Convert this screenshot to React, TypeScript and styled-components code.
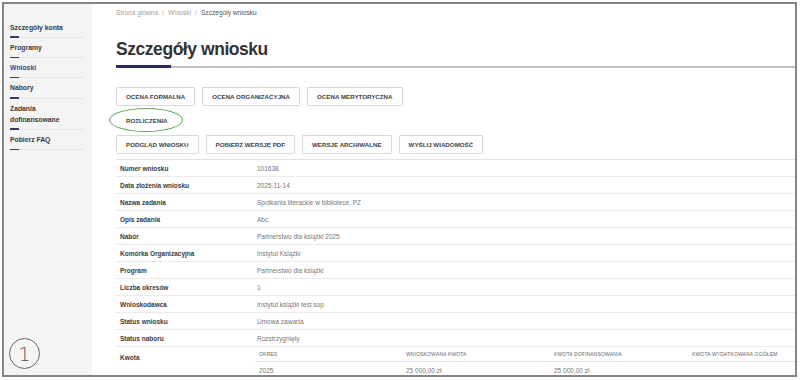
import React from "react";
import styled, { createGlobalStyle } from "styled-components";

const GlobalStyle = createGlobalStyle`
  html, body {
    margin: 0;
    padding: 0;
    background: #ffffff;
  }
  body {
    font-family: "Liberation Sans", Arial, sans-serif;
    color: #333;
  }
`;

const Frame = styled.div`
  position: relative;
  margin: 2px;
  width: 791px;
  height: 371px;
  border: 2px solid #858585;
  display: flex;
  overflow: hidden;
  background: #fff;
`;

const Sidebar = styled.nav`
  flex: 0 0 88px;
  background: #f4f4f4;
  padding: 13.5px 8px 0 6px;
  box-sizing: border-box;
`;

const NavItem = styled.div<{ $active?: boolean }>`
  position: relative;
  padding: 4px 0 4.3px;
  font-size: 6.8px;
  line-height: 11px;
  font-weight: bold;
  color: ${(p) => (p.$active ? "#3d3e8e" : "#3a3a3a")};
  border-bottom: 1px solid #e3e3e3;

  &::after {
    content: "";
    position: absolute;
    left: 0;
    bottom: -1px;
    width: 9px;
    height: 1.5px;
    background: #3a3c62;
  }
`;

const Annotation = styled.div`
  position: absolute;
  left: 5px;
  bottom: 6px;
  width: 29px;
  height: 29px;
  border: 1px solid #6a6a6a;
  border-radius: 50%;
  display: flex;
  align-items: center;
  justify-content: center;
  font-size: 19px;
  font-family: "DejaVu Sans", sans-serif;
  font-weight: 200;
  color: #555;
`;

const Main = styled.main`
  flex: 1;
  padding: 4px 0 0 24px;
  min-width: 0;
`;

const Breadcrumb = styled.div`
  font-size: 6.6px;
  line-height: 9px;
  color: #a0a0a0;
  display: flex;
  gap: 4px;

  span:last-child {
    color: #555;
  }
`;

const TitleBlock = styled.div`
  position: relative;
  margin-top: 22px;
  padding-bottom: 7px;
  border-bottom: 2px solid #c2c2c2;

  &::after {
    content: "";
    position: absolute;
    left: 0;
    bottom: -2px;
    width: 55px;
    height: 3px;
    background: #2b2c5c;
  }
`;

const Title = styled.h1`
  margin: 0;
  font-size: 17.5px;
  line-height: 20px;
  font-weight: bold;
  letter-spacing: -0.45px;
  color: #333;
`;

const ButtonRows = styled.div`
  margin-top: 18.5px;
  display: flex;
  flex-direction: column;
  gap: 5px;
`;

const ButtonRow = styled.div`
  display: flex;
  gap: 7px;
`;

const Button = styled.button<{ $plain?: boolean; $circled?: boolean }>`
  position: relative;
  font-family: "Liberation Sans", Arial, sans-serif;
  font-size: 6.2px;
  line-height: 9px;
  font-weight: bold;
  text-transform: uppercase;
  color: #444;
  background: #fff;
  padding: 4px 9px;
  border: 1px solid ${(p) => (p.$plain ? "transparent" : "#dadada")};
  border-radius: 1px;

  &::after {
    content: "";
    display: ${(p) => (p.$circled ? "block" : "none")};
    position: absolute;
    left: -8px;
    top: -4px;
    width: 72px;
    height: 22px;
    border: 1.5px solid #62a152;
    border-radius: 50%;
  }
`;

const Table = styled.div`
  margin-top: 5px;
  border-top: 1px solid #e3e3e3;
`;

const Row = styled.div`
  display: grid;
  grid-template-columns: 137px 1fr;
  border-bottom: 1px solid #ebebeb;
`;

const Label = styled.div<{ $top?: number }>`
  padding: ${(p) => p.$top ?? 4}px 4px 3px;
  font-size: 6.5px;
  line-height: 9px;
  font-weight: bold;
  color: #3c3c3c;
`;

const Value = styled.div`
  padding: 4px 4px 3px;
  font-size: 6.5px;
  line-height: 9px;
  color: #777;
`;

const SubTable = styled.div`
  margin-left: 2px;
`;

const SubRow = styled.div<{ $head?: boolean }>`
  display: grid;
  grid-template-columns: 147px 148px 138px 1fr;
  border-bottom: ${(p) => (p.$head ? "1px solid #e3e3e3" : "none")};
`;

const SubCell = styled.div<{ $head?: boolean }>`
  padding: 4px 4px 3px;
  font-size: ${(p) => (p.$head ? "5px" : "6.5px")};
  line-height: ${(p) => (p.$head ? "7px" : "9px")};
  letter-spacing: ${(p) => (p.$head ? "0.15px" : "0")};
  text-transform: ${(p) => (p.$head ? "uppercase" : "none")};
  color: ${(p) => (p.$head ? "#666" : "#777")};
  white-space: nowrap;
`;

const nav = [
  { label: "Szczegóły konta" },
  { label: "Programy" },
  { label: "Wnioski", active: true },
  { label: "Nabory" },
  { label: "Zadania\ndofinansowane" },
  { label: "Pobierz FAQ" },
];

const details: [string, string][] = [
  ["Numer wniosku", "101638"],
  ["Data złożenia wniosku", "2025-11-14"],
  ["Nazwa zadania", "Spotkania literackie w bibliotece. PZ"],
  ["Opis zadania", "Abc."],
  ["Nabór", "Partnerstwo dla książki 2025"],
  ["Komórka Organizacyjna", "Instytut Książki"],
  ["Program", "Partnerstwo dla książki"],
  ["Liczba okresów", "1"],
  ["Wnioskodawca", "Instytut książki test sop"],
  ["Status wniosku", "Umowa zawarta"],
  ["Status naboru", "Rozstrzygnięty"],
];

const amountHead = ["Okres", "Wnioskowana kwota", "Kwota dofinansowania", "Kwota wydatkowana ogółem"];
const amountRow = ["2025", "25 000,00 zł", "25 000,00 zł", ""];

export default function App() {
  return (
    <>
      <GlobalStyle />
      <Frame>
        <Sidebar>
          {nav.map((n) => (
            <NavItem key={n.label} $active={n.active}>
              {n.label.split("\n").map((l) => (
                <div key={l}>{l}</div>
              ))}
            </NavItem>
          ))}
        </Sidebar>
        <Annotation>1</Annotation>

        <Main>
          <Breadcrumb>
            <span>Strona główna</span>
            <span>/</span>
            <span>Wnioski</span>
            <span>/</span>
            <span>Szczegóły wniosku</span>
          </Breadcrumb>

          <TitleBlock>
            <Title>Szczegóły wniosku</Title>
          </TitleBlock>

          <ButtonRows>
            <ButtonRow>
              <Button>Ocena formalna</Button>
              <Button>Ocena organizacyjna</Button>
              <Button>Ocena merytoryczna</Button>
            </ButtonRow>
            <ButtonRow>
              <Button $plain $circled>
                Rozliczenia
              </Button>
            </ButtonRow>
            <ButtonRow>
              <Button>Podgląd wniosku</Button>
              <Button>Pobierz wersję PDF</Button>
              <Button>Wersje archiwalne</Button>
              <Button>Wyślij wiadomość</Button>
            </ButtonRow>
          </ButtonRows>

          <Table>
            {details.map(([k, v]) => (
              <Row key={k}>
                <Label>{k}</Label>
                <Value>{v}</Value>
              </Row>
            ))}
            <Row>
              <Label $top={6}>Kwota</Label>
              <SubTable>
                <SubRow $head>
                  {amountHead.map((h) => (
                    <SubCell $head key={h}>
                      {h}
                    </SubCell>
                  ))}
                </SubRow>
                <SubRow>
                  {amountRow.map((c, i) => (
                    <SubCell key={i}>{c}</SubCell>
                  ))}
                </SubRow>
              </SubTable>
            </Row>
          </Table>
        </Main>
      </Frame>
    </>
  );
}
